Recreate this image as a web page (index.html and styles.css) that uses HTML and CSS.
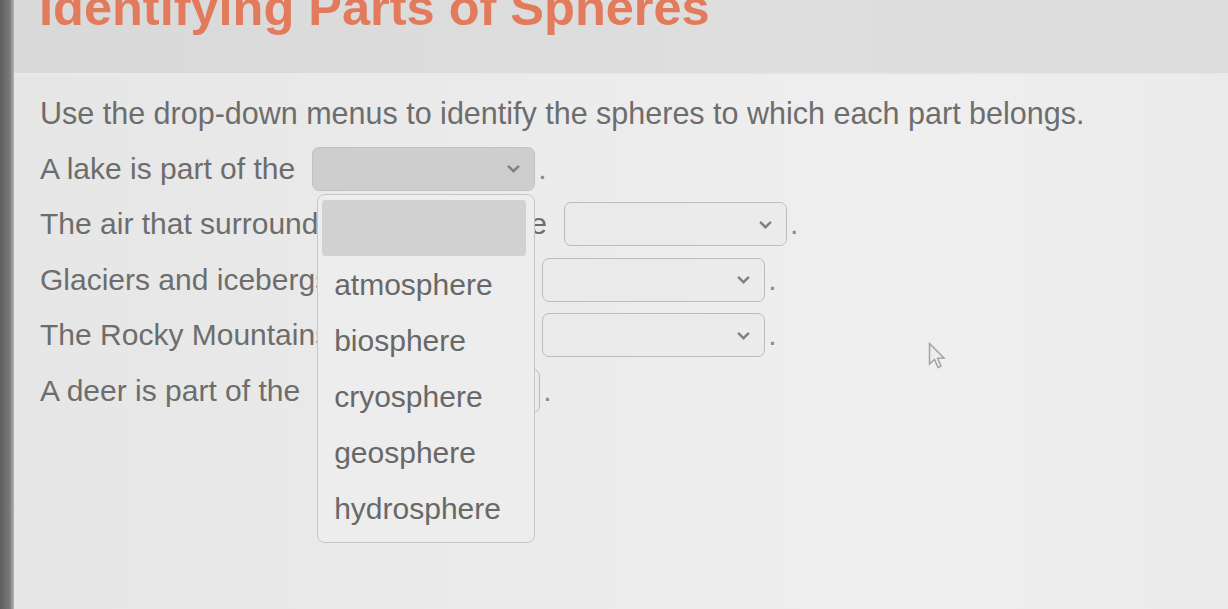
FILE: index.html
```html
<!DOCTYPE html>
<html lang="en">
<head>
  <meta charset="UTF-8" />
  <meta name="viewport" content="width=device-width, initial-scale=1.0"/>
  <title>Identifying Parts of Spheres</title>
  <link rel="stylesheet" href="styles.css">
</head>
<body>
  <div class="screen-edge"></div>
  <div class="page">
    <div class="title-bar">
      <h1>Identifying Parts of Spheres</h1>
    </div>

    <div class="content">
      <p class="instructions">Use the drop-down menus to identify the spheres to which each part belongs.</p>

      <div class="row">
        <span>A lake is part of the</span>
        <div class="select-wrap">
          <div class="select open">
            <svg class="chevron" viewBox="0 0 12 8"><path d="M1 1.5 L6 6.5 L11 1.5"/></svg>
          </div>
          <ul class="dropdown">
            <li class="blank active"></li>
            <li>atmosphere</li>
            <li>biosphere</li>
            <li>cryosphere</li>
            <li>geosphere</li>
            <li>hydrosphere</li>
          </ul>
        </div>
        <span class="dot">.</span>
      </div>

      <div class="row">
        <span>The air that surrounds us is part of the</span>
        <div class="select">
          <svg class="chevron" viewBox="0 0 12 8"><path d="M1 1.5 L6 6.5 L11 1.5"/></svg>
        </div>
        <span class="dot">.</span>
      </div>

      <div class="row">
        <span>Glaciers and icebergs are part of the</span>
        <div class="select">
          <svg class="chevron" viewBox="0 0 12 8"><path d="M1 1.5 L6 6.5 L11 1.5"/></svg>
        </div>
        <span class="dot">.</span>
      </div>

      <div class="row">
        <span>The Rocky Mountains are part of the</span>
        <div class="select">
          <svg class="chevron" viewBox="0 0 12 8"><path d="M1 1.5 L6 6.5 L11 1.5"/></svg>
        </div>
        <span class="dot">.</span>
      </div>

      <div class="row">
        <span>A deer is part of the</span>
        <div class="select">
          <svg class="chevron" viewBox="0 0 12 8"><path d="M1 1.5 L6 6.5 L11 1.5"/></svg>
        </div>
        <span class="dot">.</span>
      </div>
    </div>

    <svg class="cursor" viewBox="0 0 18 28">
      <path d="M1.5 1.5 L1.5 22 L6.5 17.5 L10 25.5 L13 24.2 L9.6 16.2 L16 16 Z"/>
    </svg>
  </div>
</body>
</html>
```

FILE: styles.css
```css
html, body {
    margin: 0;
    height: 100%;
    overflow: hidden;
}
body {
    display: flex;
    font-family: "Liberation Sans", Arial, sans-serif;
    background-color: #e8e8e8;
}
.screen-edge {
    width: 14px;
    flex-shrink: 0;
    background: linear-gradient(90deg, #5f5f5f, #7a7a7a 70%, #b9b2b2);
}
.page {
    flex: 1;
    position: relative;
    background: linear-gradient(90deg, #e6e6e6, #ebebeb 40%, #efefef 75%, #ebebeb);
}
.title-bar {
    height: 73px;
    background: linear-gradient(90deg, #d9d9d9, #dedede 60%, #dcdcdc);
    border-bottom: 2px solid #e9e9e9;
    overflow: hidden;
}
h1 {
    margin: -17px 0 0 25px;
    font-size: 50.5px;
    line-height: 1;
    font-weight: bold;
    color: #e27a5c;
    white-space: nowrap;
}
.content {
    padding: 16px 0 0 26px;
    color: #6d6d6d;
    font-size: 30px;
}
.instructions {
    margin: 0 0 10px;
    height: 45px;
    line-height: 45px;
    font-size: 30.5px;
}
.row {
    display: flex;
    align-items: center;
    gap: 17px;
    height: 45px;
    margin-bottom: 10.5px;
    white-space: nowrap;
}
.row .dot {
    margin-left: -14px;
    color: #8a8a8a;
}
.select-wrap {
    position: relative;
}
.select {
    width: 221px;
    height: 42px;
    border: 1.5px solid #bcbcbc;
    border-radius: 7px;
    background-color: #ebebeb;
    display: flex;
    align-items: center;
    justify-content: flex-end;
}
.select.open {
    background-color: #cecece;
    border-color: #c3c3c3;
}
.chevron {
    width: 13px;
    height: 9px;
    margin-right: 14px;
    fill: none;
    stroke: #808080;
    stroke-width: 2.2;
}
.dropdown {
    position: absolute;
    top: 100%;
    left: 5px;
    right: 0;
    margin: 3px 0 0;
    padding: 5px 8px 6px 4px;
    list-style: none;
    background-color: #ededed;
    border: 1.5px solid #c6c6c6;
    border-radius: 8px;
    z-index: 2;
}
.dropdown li {
    height: 56px;
    line-height: 58px;
    padding-left: 12px;
    color: #686868;
    font-size: 30px;
}
.dropdown li.active {
    background-color: #d1d1d1;
    border-radius: 3px;
}
.cursor {
    position: absolute;
    left: 914px;
    top: 342px;
    width: 18px;
    height: 28px;
    fill: #ececec;
    stroke: #a3a3a3;
    stroke-width: 1.5;
}
```
